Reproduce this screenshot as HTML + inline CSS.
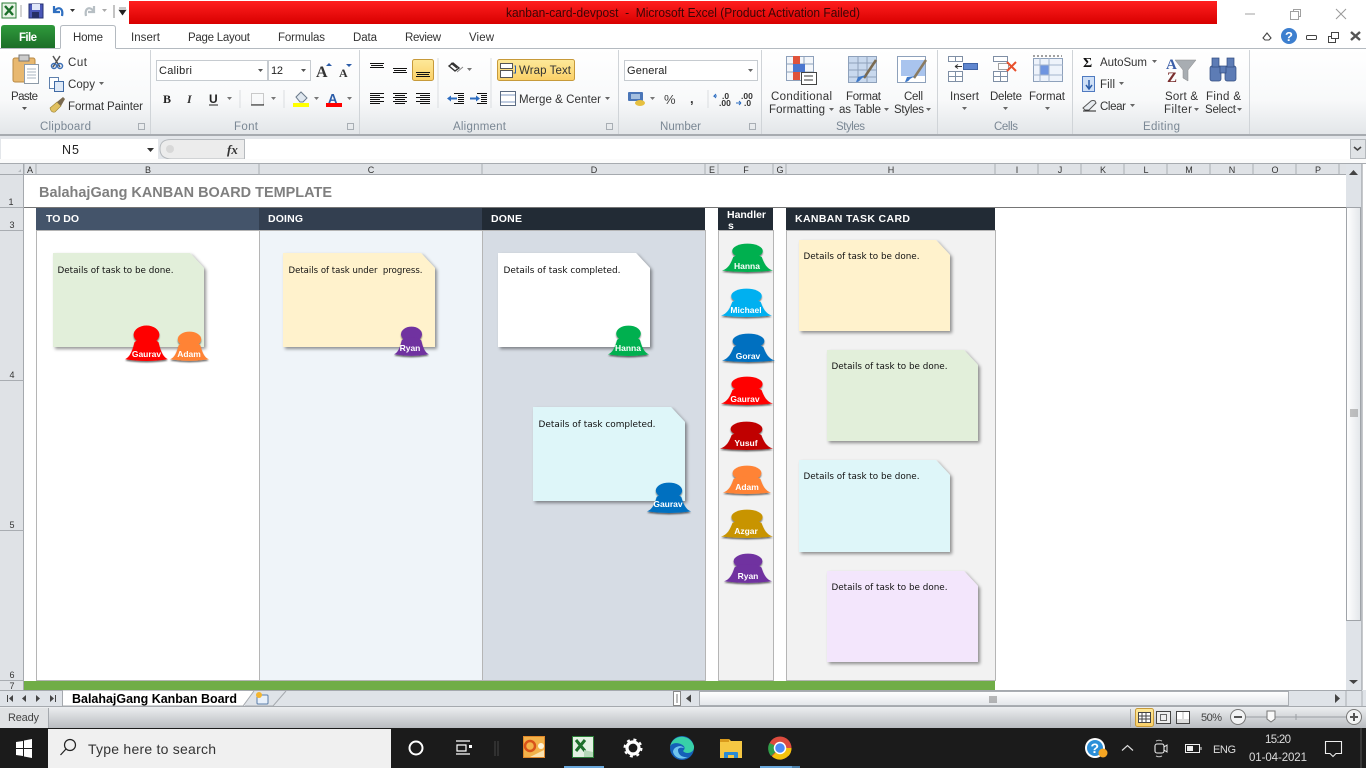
<!DOCTYPE html>
<html lang="en"><head><meta charset="utf-8"><title>kanban-card-devpost - Microsoft Excel</title>
<style>
html,body{margin:0;padding:0;background:#fff;width:1366px;height:768px;overflow:hidden}
svg{display:block}
text{font-family:"Liberation Sans",sans-serif;white-space:pre}
.r{font-size:11.5px;fill:#333}
.g{font-size:11.5px;fill:#7a8794}
.t{font-size:11px;fill:#444}
.c{font-size:9px;fill:#333;text-anchor:middle}
.d{font-family:"DejaVu Sans",sans-serif;font-size:9px;fill:#111}
.h{font-size:10.5px;font-weight:bold;fill:#fff}
.n{font-size:8.5px;font-weight:bold;fill:#fff;text-anchor:middle}
.x{shape-rendering:crispEdges}
</style></head><body>
<svg width="1366" height="768" viewBox="0 0 1366 768" xmlns="http://www.w3.org/2000/svg">
<defs>
<linearGradient id="red" x1="0" y1="0" x2="0" y2="1"><stop offset="0" stop-color="#ff1f1f"/><stop offset="1" stop-color="#d80000"/></linearGradient>
<linearGradient id="rib" x1="0" y1="0" x2="0" y2="1"><stop offset="0" stop-color="#fff"/><stop offset=".6" stop-color="#f8f9fa"/><stop offset="1" stop-color="#e3e6e9"/></linearGradient>
<linearGradient id="file" x1="0" y1="0" x2="0" y2="1"><stop offset="0" stop-color="#2f9a3c"/><stop offset="1" stop-color="#1c6e28"/></linearGradient>
<linearGradient id="sel" x1="0" y1="0" x2="0" y2="1"><stop offset="0" stop-color="#fde99a"/><stop offset="1" stop-color="#fbd067"/></linearGradient>
<linearGradient id="st" x1="0" y1="0" x2="0" y2="1"><stop offset="0" stop-color="#eceef0"/><stop offset="1" stop-color="#b9bcc0"/></linearGradient>
<linearGradient id="sb" x1="0" y1="0" x2="0" y2="1"><stop offset="0" stop-color="#fff"/><stop offset="1" stop-color="#e3e6ea"/></linearGradient>
<linearGradient id="sv" x1="0" y1="0" x2="1" y2="0"><stop offset="0" stop-color="#fff"/><stop offset="1" stop-color="#e3e6ea"/></linearGradient>
<filter id="sh" x="-10%" y="-10%" width="125%" height="125%"><feDropShadow dx="2" dy="2" stdDeviation="1.6" flood-color="#000" flood-opacity=".42"/></filter>
<filter id="ps" x="-10%" y="-10%" width="120%" height="130%"><feDropShadow dx="0" dy="1.5" stdDeviation=".8" flood-color="#000" flood-opacity=".55"/></filter>
<g id="p"><ellipse cx="0" cy="7" rx="15" ry="7.4"/><path d="M-25 26.5C-19 25-16 19-14 13Q-10 10 0 10Q10 10 14 13C16 19 19 25 25 26.5Q0 29.5-25 26.5Z"/></g>
</defs>

<rect width="1366" height="768" fill="#fff"/>

<!-- title bar -->
<rect x="129" y="1" width="1088" height="23" fill="url(#red)"/>
<text x="506" y="17" font-size="12.5" fill="#3a0606" textLength="354" lengthAdjust="spacingAndGlyphs">kanban-card-devpost  -  Microsoft Excel (Product Activation Failed)</text>
<!-- QAT -->
<rect x="2" y="3" width="14" height="15" fill="#e8f3e6" stroke="#2a7d36"/><path d="M5 6L13 15M13 6L5 15" stroke="#1d6f2b" stroke-width="2.4"/>
<path class="x" d="M21 5V17" stroke="#aaa"/>
<rect x="29" y="4" width="14" height="14" fill="#4a57b8" stroke="#26306f"/><rect x="32" y="4" width="8" height="6" fill="#dfe6f8"/><rect x="32" y="12" width="7" height="6" fill="#262f66"/>
<path d="M54 6V12H60M54 12C57 6 64 7 62 16" fill="none" stroke="#2f6fc0" stroke-width="2.2"/>
<path d="M70 9H75L72.5 12Z" fill="#333"/>
<path d="M94 6V12H88M94 12C91 6 84 7 86 16" fill="none" stroke="#b7bfc4" stroke-width="2.2"/>
<path d="M102 9H107L104.500 12Z" fill="#aaa"/>
<path class="x" d="M114 5V18" stroke="#888"/><path d="M119 8H126M119 10H126L122.500 15Z" fill="#222" stroke="#222" stroke-width=".6"/>
<!-- window controls -->
<path class="x" d="M1245 14H1255" stroke="#a0a0a0"/>
<rect x="1290.500" y="11.500" width="8" height="8" fill="none" stroke="#a0a0a0"/><path d="M1293.500 11V9.500H1300.500V16.500H1298" fill="none" stroke="#a0a0a0"/>
<path d="M1336 9L1346 19M1346 9L1336 19" stroke="#999"/>

<!-- tabs -->
<path d="M1 48V28Q1 25 4 25H52Q55 25 55 28V48Z" fill="url(#file)"/>
<text x="19" y="41" font-size="11.500" font-weight="bold" fill="#fff" textLength="18">File</text>
<path d="M0 48.500H60M116 48.500H1366" stroke="#b4bac0"/>
<path d="M60.500 48.500V28Q60.500 25.500 63 25.500H113Q115.500 25.500 115.500 28V48.500" fill="#fff" stroke="#b4bac0"/>
<text x="73" y="41" class="r" textLength="30">Home</text>
<text x="131" y="41" class="r" textLength="29">Insert</text>
<text x="188" y="41" class="r" textLength="62">Page Layout</text>
<text x="278" y="41" class="r" textLength="47">Formulas</text>
<text x="353" y="41" class="r" textLength="24">Data</text>
<text x="405" y="41" class="r" textLength="36">Review</text>
<text x="469" y="41" class="r" textLength="25">View</text>
<!-- help row -->
<path d="M1263 38L1267 33L1271 38L1269 40H1265Z" fill="none" stroke="#444" stroke-width="1.100"/>
<circle cx="1289" cy="36" r="8" fill="#3d7fcf"/><text x="1285" y="41" font-size="13" font-weight="bold" fill="#fff">?</text>
<rect x="1306.500" y="35.500" width="10" height="4" rx="1" fill="none" stroke="#444"/>
<rect x="1328.500" y="36.500" width="7" height="6" fill="none" stroke="#444"/><rect x="1331.500" y="32.500" width="7" height="6" fill="#fff" stroke="#444"/>
<path d="M1351 32L1360 40M1360 32L1351 40" stroke="#555" stroke-width="2.400"/>

<!-- ribbon -->
<rect x="0" y="49" width="1366" height="85" fill="url(#rib)"/>
<rect x="0" y="134" width="1366" height="2" fill="#a7abb0"/>
<path d="M150.500 50V134M359.500 50V134M618.500 50V134M761.500 50V134M937.500 50V134M1072.500 50V134M1249.500 50V134" stroke="#d0d4d8"/>
<text x="40" y="130" class="g" textLength="51">Clipboard</text>
<text x="234" y="130" class="g" textLength="24">Font</text>
<text x="453" y="130" class="g" textLength="53">Alignment</text>
<text x="660" y="130" class="g" textLength="41">Number</text>
<text x="836" y="130" class="g" textLength="29">Styles</text>
<text x="994" y="130" class="g" textLength="24">Cells</text>
<text x="1143" y="130" class="g" textLength="37">Editing</text>
<g fill="none" stroke="#a8aeb4"><path d="M138.500 123.500h6v6h-6z"/><path d="M347.500 123.500h6v6h-6z"/><path d="M606.500 123.500h6v6h-6z"/><path d="M749.500 123.500h6v6h-6z"/></g>

<!-- clipboard -->
<rect x="13" y="58" width="22" height="24" rx="2" fill="#e8b870" stroke="#b98a45"/><rect x="19" y="55" width="10" height="6" fill="#ccc" stroke="#777"/>
<rect x="24.500" y="64.500" width="14" height="19" fill="#fff" stroke="#8d9aa8"/><path class="x" d="M27 69h9M27 72h9M27 75h9M27 78h9" stroke="#aab4c0"/>
<text x="11" y="100" class="r" textLength="27">Paste</text><path d="M22 107h5l-2.500 3z" fill="#555"/>
<path d="M53 56L60 67M60 56L53 67" stroke="#555" stroke-width="1.500"/><circle cx="54" cy="66" r="2.500" fill="none" stroke="#3c6fb5" stroke-width="1.500"/><circle cx="60" cy="66" r="2.500" fill="none" stroke="#3c6fb5" stroke-width="1.500"/>
<text x="68" y="66" class="r" textLength="19">Cut</text>
<rect x="49.500" y="77.500" width="9" height="11" fill="#fff" stroke="#5f80ad"/><rect x="54.500" y="81.500" width="9" height="10" fill="#dfe9f6" stroke="#3f6aa5"/>
<text x="68" y="88" class="r" textLength="27">Copy</text><path d="M99 82h5l-2.500 3z" fill="#666"/>
<path d="M50 108l7-6 4 4-6 6q-4 1-5-4z" fill="#e0c060" stroke="#9a8030" stroke-width=".6"/><path d="M57 102l6-5 2 2-4 7z" fill="#7a6a50"/>
<text x="68" y="110" class="r" textLength="75">Format Painter</text>

<!-- font -->
<rect x="156.500" y="60.500" width="111" height="20" fill="#fff" stroke="#c6cbd0"/><rect x="268.500" y="60.500" width="42" height="20" fill="#fff" stroke="#c6cbd0"/>
<text x="159" y="74" font-size="11" fill="#222" textLength="33">Calibri</text><text x="271" y="74" font-size="11" fill="#222" textLength="12">12</text>
<path d="M258 69h5l-2.500 3zM301 69h5l-2.500 3z" fill="#555"/>
<text x="316" y="77" font-family="Liberation Serif" font-size="16" font-weight="bold" fill="#333" style="font-family:'Liberation Serif',serif">A</text><path d="M326 66h6l-3-3z" fill="#2b5ca8"/>
<text x="339" y="77" font-size="12" font-weight="bold" fill="#333" style="font-family:'Liberation Serif',serif">A</text><path d="M346 64h6l-3 3z" fill="#2b5ca8"/>
<text x="163" y="103" font-size="12" font-weight="bold" fill="#222" style="font-family:'Liberation Serif',serif">B</text>
<text x="187" y="103" font-size="12" font-style="italic" font-weight="bold" fill="#333" style="font-family:'Liberation Serif',serif">I</text>
<text x="209" y="103" font-size="12" font-weight="bold" fill="#222">U</text><path class="x" d="M209 105h9" stroke="#222"/>
<path d="M227 97h5l-2.500 3z" fill="#777"/><path class="x" d="M240 90V108" stroke="#dadde0"/>
<rect x="251.500" y="93.500" width="12" height="11" fill="none" stroke="#999" stroke-dasharray="1 1"/><path class="x" d="M251 105h13" stroke="#222"/><path d="M271 97h5l-2.500 3z" fill="#777"/>
<path class="x" d="M284 90V108" stroke="#dadde0"/>
<path d="M296 97l5-5 6 6-4 4h-3z" fill="#dfe7ef" stroke="#6a7a8a"/><rect x="293" y="103" width="16" height="4" fill="#ffff00"/><path d="M314 97h5l-2.500 3z" fill="#777"/>
<text x="328" y="103" font-size="13" font-weight="bold" fill="#2b5ca8">A</text><rect x="326" y="103" width="16" height="4" fill="#f00"/><path d="M347 97h5l-2.500 3z" fill="#777"/>

<!-- alignment -->
<rect x="412.500" y="59.500" width="21" height="21" rx="2" fill="url(#sel)" stroke="#c79a3a"/>
<g stroke="#111" class="x"><path d="M370 63.500h14M371 65.500h12M370 67.500h14"/><path d="M393 68.500h14M394 70.500h12M393 72.500h14"/><path d="M416 72.500h14M417 74.500h12M416 76.500h14"/>
<path d="M370 93.500h14M370 95.500h10M370 97.500h14M370 99.500h10M370 101.500h14M370 103.500h10"/><path d="M393 93.500h14M395 95.500h10M393 97.500h14M395 99.500h10M393 101.500h14M395 103.500h10"/><path d="M416 93.500h14M420 95.500h10M416 97.500h14M420 99.500h10M416 101.500h14M420 103.500h10"/>
<path d="M454 93.500h10M458 95.500h6M458 97.500h6M458 99.500h6M458 101.500h6M454 103.500h10"/><path d="M477 93.500h10M481 95.500h6M481 97.500h6M481 99.500h6M481 101.500h6M477 103.500h10"/></g>
<path d="M447 98.500l4-3v2h6v2h-6v2z" fill="#2b6cc0"/><path d="M480 98.500l-4-3v2h-6v2h6v2z" fill="#2b6cc0"/>
<path d="M449 66l6 5 4-3-6-5zM451 63l6 5" fill="none" stroke="#333" stroke-width="1.400"/><path d="M457 72l6-5" stroke="#888"/>
<path d="M467 68h5l-2.500 3z" fill="#777"/>
<path class="x" d="M438 58V108M491 58V108" stroke="#dadde0"/>
<rect x="497.500" y="59.500" width="77" height="21" rx="2" fill="url(#sel)" stroke="#c79a3a"/>
<rect x="500.500" y="63.500" width="12" height="5" fill="#fff" stroke="#555"/><rect x="500.500" y="70.500" width="12" height="7" fill="#fff" stroke="#555"/><path d="M514.500 66h1v7h-2" fill="none" stroke="#2b5ca8"/>
<text x="519" y="74" class="r" textLength="52">Wrap Text</text>
<rect x="500.500" y="91.500" width="15" height="14" fill="#fff" stroke="#5a6a80"/><path class="x" d="M501 95h14M501 102h14" stroke="#7f99c0"/>
<text x="519" y="103" class="r" textLength="82">Merge &amp; Center</text><path d="M605 97h5l-2.500 3z" fill="#666"/>

<!-- number -->
<rect x="624.500" y="60.500" width="133" height="20" fill="#fff" stroke="#c6cbd0"/><text x="627" y="74" font-size="11" fill="#222" textLength="40">General</text><path d="M748 69h5l-2.500 3z" fill="#666"/>
<rect x="628" y="92" width="15" height="9" rx="1" fill="#4a76b8"/><rect x="631" y="94" width="9" height="5" fill="#a4bfdf"/><ellipse cx="640" cy="103" rx="5" ry="3" fill="#e6c040"/>
<path d="M650 97h5l-2.500 3z" fill="#777"/>
<text x="664" y="104" font-size="13" fill="#444">%</text>
<text x="690" y="103" font-size="13" font-weight="bold" fill="#333">,</text>
<path class="x" d="M708 90V108" stroke="#dadde0"/>
<text x="722" y="99" font-size="8.500" font-weight="bold" fill="#333">.0</text><text x="719" y="106" font-size="8.500" font-weight="bold" fill="#333">.00</text><path d="M717 96h-3l2-2M714 96l2 2" stroke="#2b6cc0" fill="none"/>
<text x="741" y="99" font-size="8.500" font-weight="bold" fill="#333">.00</text><text x="744" y="106" font-size="8.500" font-weight="bold" fill="#333">.0</text><path d="M736 103h5M741 103l-2-2M741 103l-2 2" stroke="#2b6cc0" fill="none"/>

<!-- styles -->
<rect x="786.500" y="56.500" width="27" height="24" fill="#f3f6fa" stroke="#8ea1bb"/><path class="x" d="M786 64h27M786 72h27M795 56v24M804 56v24" stroke="#8ea1bb"/><rect x="793" y="56" width="7" height="8" fill="#e0533b"/><rect x="793" y="64" width="12" height="8" fill="#4a76cf"/><rect x="793" y="72" width="7" height="8" fill="#e0533b"/>
<rect x="801.500" y="72.500" width="15" height="12" fill="#fff" stroke="#444"/><path class="x" d="M804 76h9M804 80h9" stroke="#333"/>
<text x="771" y="100" class="r" textLength="61">Conditional</text><text x="769" y="113" class="r" textLength="56">Formatting</text><path d="M829 108h5l-2.500 3z" fill="#666"/>
<rect x="848.500" y="56.500" width="28" height="26" fill="#c9d9ee" stroke="#8ea1bb"/><path class="x" d="M848 63h29M848 70h29M848 77h29M858 56v27M867 56v27" stroke="#8ea1bb"/><path d="M876 60l-12 18" stroke="#7a6a50" stroke-width="2.500"/><path d="M866 75l-5 4q-2 3-5 3l2-5z" fill="#3e78c8"/>
<text x="846" y="100" class="r" textLength="35">Format</text><text x="839" y="113" class="r" textLength="42">as Table</text><path d="M884 108h5l-2.500 3z" fill="#666"/>
<rect x="897.500" y="56.500" width="28" height="26" fill="#fff" stroke="#8ea1bb"/><rect x="901" y="60" width="24" height="16" fill="#a9c4ee"/><path d="M926 60l-12 18" stroke="#8a7a60" stroke-width="2.500"/><path d="M915 76l-5 3q-2 3-5 3l2-5z" fill="#3e78c8"/>
<text x="904" y="100" class="r" textLength="19">Cell</text><text x="894" y="113" class="r" textLength="30">Styles</text><path d="M926 108h5l-2.500 3z" fill="#666"/>

<!-- cells -->
<g fill="#fff" stroke="#7f8fa5"><rect x="948.500" y="56.500" width="14" height="5"/><rect x="948.500" y="71.500" width="14" height="10"/><path d="M948 76.500h15M955.500 71v11M955.500 56v6"/></g>
<rect x="963.500" y="63.500" width="14" height="6" fill="#5f86cf" stroke="#3f63a5"/><path d="M955 66.500h7M955 66.500l3-2M955 66.500l3 2" stroke="#333" fill="none"/>
<g fill="#fff" stroke="#7f8fa5"><rect x="993.500" y="56.500" width="14" height="5"/><rect x="993.500" y="71.500" width="14" height="10"/><path d="M993 76.500h15M1000.500 71v11"/><rect x="998.500" y="63.500" width="10" height="6" stroke-dasharray="1 1" stroke="#444"/></g>
<path d="M1007 62l9 9M1016 62l-9 9" stroke="#e8502c" stroke-width="2"/>
<rect x="1033.500" y="58.500" width="29" height="23" fill="#eef3fb" stroke="#8ea1bb"/><rect x="1040" y="65" width="9" height="10" fill="#6f95e0"/><path class="x" d="M1033 65h30M1033 75h30M1040 58v24M1049 58v24" stroke="#a4b5cc"/><path class="x" d="M1033 56h29" stroke="#444" stroke-dasharray="2 2"/>
<text x="950" y="100" class="r" textLength="29">Insert</text><path d="M962 107h5l-2.500 3z" fill="#666"/>
<text x="990" y="100" class="r" textLength="32">Delete</text><path d="M1003 107h5l-2.500 3z" fill="#666"/>
<text x="1029" y="100" class="r" textLength="36">Format</text><path d="M1045 107h5l-2.500 3z" fill="#666"/>

<!-- editing -->
<text x="1083" y="67" font-size="14" font-weight="bold" fill="#111" style="font-family:'Liberation Serif',serif">Σ</text>
<text x="1100" y="66" class="r" textLength="47">AutoSum</text><path d="M1152 60h5l-2.500 3z" fill="#666"/>
<rect x="1082.500" y="76.500" width="12" height="15" fill="#cfe0f7" stroke="#4f7ac0"/><path d="M1089 80v8M1086 85l3 4 3-4" stroke="#2b5ca8" fill="none" stroke-width="1.500"/>
<text x="1100" y="88" class="r" textLength="15">Fill</text><path d="M1119 82h5l-2.500 3z" fill="#666"/>
<path d="M1083 108l8-7q2-1 4 0l1 2-7 7h-4z" fill="#e8ecf0" stroke="#555"/><path class="x" d="M1083 111h13" stroke="#222"/>
<text x="1100" y="110" class="r" textLength="26">Clear</text><path d="M1130 104h5l-2.500 3z" fill="#666"/>
<text x="1166" y="69" font-size="15" font-weight="bold" fill="#3b5ea8" style="font-family:'Liberation Serif',serif">A</text><text x="1167" y="82" font-size="15" font-weight="bold" fill="#7a2e2e" style="font-family:'Liberation Serif',serif">Z</text>
<path d="M1175 60h21l-8 10v11l-5-3v-8z" fill="#a8adb2" stroke="#888" stroke-width=".5"/>
<text x="1165" y="100" class="r" textLength="33">Sort &amp;</text><text x="1164" y="113" class="r" textLength="28">Filter</text><path d="M1194 108h5l-2.500 3z" fill="#666"/>
<g fill="#5d7cb5" stroke="#2f4a7e" stroke-width=".7"><rect x="1210" y="66" width="11" height="15" rx="2"/><rect x="1225" y="66" width="11" height="15" rx="2"/><rect x="1212" y="58" width="7" height="9"/><rect x="1227" y="58" width="7" height="9"/><rect x="1220" y="66" width="6" height="7"/></g>
<text x="1206" y="100" class="r" textLength="35">Find &amp;</text><text x="1205" y="113" class="r" textLength="31">Select</text><path d="M1237 108h5l-2.500 3z" fill="#666"/>

<!-- formula bar -->
<rect x="0" y="136" width="1366" height="28" fill="#e3e6ea"/>
<rect x="1" y="139" width="157" height="20" fill="#fff"/>
<text x="62" y="154" font-size="12.500" fill="#222" textLength="17">N5</text>
<path d="M147 148h7l-3.500 4z" fill="#333"/>
<path d="M172 139.500H244.500V159H172Q160 159 160 149T172 139.500Z" fill="#ececec" stroke="#b6babe"/>
<circle cx="170" cy="149" r="4" fill="#d8d8d8"/>
<text x="227" y="154" font-size="13" font-style="italic" font-weight="bold" fill="#333" style="font-family:'Liberation Serif',serif">fx</text>
<rect x="245" y="139" width="1105" height="20" fill="#fff"/>
<rect x="1350.500" y="139.500" width="15" height="19" fill="#e0e3e6" stroke="#b5b9bd"/><path d="M1354 147l3.500 3 3.500-3" fill="none" stroke="#444" stroke-width="1.600"/>
<rect x="0" y="159" width="1366" height="4" fill="#fbfbfb"/>
<path d="M0 163.500H1366" stroke="#a7abb0"/>

<!-- column header -->
<rect x="0" y="164" width="1346" height="11" fill="#dfe2e6"/>
<path d="M0 174.500H1346" stroke="#a5a9ae"/>
<path class="x" d="M24 164v11M36 164v11M259 164v11M482 164v11M705 164v11M718 164v11M773 164v11M786 164v11M995 164v11M1038 164v11M1081 164v11M1124 164v11M1167 164v11M1210 164v11M1253 164v11M1296 164v11M1339 164v11" stroke="#a9adb2"/>
<path d="M18 172l3-3v3z" fill="#b9bdc2"/>
<text x="30" y="173" class="c">A</text><text x="148" y="173" class="c">B</text><text x="371" y="173" class="c">C</text><text x="594" y="173" class="c">D</text><text x="712" y="173" class="c">E</text><text x="746" y="173" class="c">F</text><text x="780" y="173" class="c">G</text><text x="891" y="173" class="c">H</text><text x="1017" y="173" class="c">I</text><text x="1060" y="173" class="c">J</text><text x="1103" y="173" class="c">K</text><text x="1146" y="173" class="c">L</text><text x="1189" y="173" class="c">M</text><text x="1232" y="173" class="c">N</text><text x="1275" y="173" class="c">O</text><text x="1318" y="173" class="c">P</text>

<!-- row header -->
<rect x="0" y="175" width="24" height="515" fill="#dfe2e6"/>
<path d="M23.500 164V690" stroke="#a5a9ae"/>
<path d="M0 207.500H24M0 230.500H24M0 380.500H24M0 530.500H24M0 680.500H24M0 690.500H24" stroke="#a9adb2"/>
<text x="11" y="205" class="c">1</text><text x="12" y="228" class="c">3</text><text x="12" y="378" class="c">4</text><text x="12" y="528" class="c">5</text><text x="12" y="678" class="c">6</text><text x="12" y="689" class="c">7</text>

<!-- sheet -->
<text x="39" y="197" font-size="14.500" font-weight="bold" fill="#7f7f7f" textLength="293" lengthAdjust="spacingAndGlyphs">BalahajGang KANBAN BOARD TEMPLATE</text>
<path d="M24 207.500H1346" stroke="#757575"/>
<rect x="36" y="208" width="223" height="22" fill="#44546a"/><rect x="259" y="208" width="223" height="22" fill="#333f50"/><rect x="482" y="208" width="223" height="22" fill="#222b35"/><rect x="718" y="208" width="55" height="22" fill="#222b35"/><rect x="786" y="208" width="209" height="22" fill="#222b35"/>
<text x="46" y="222" class="h" textLength="33">TO DO</text><text x="268" y="222" class="h" textLength="35">DOING</text><text x="491" y="222" class="h" textLength="31">DONE</text>
<text x="727" y="218" class="h" textLength="39">Handler</text><text x="728" y="229" class="h">s</text>
<text x="795" y="222" class="h" textLength="115">KANBAN TASK CARD</text>
<rect x="36.500" y="230.500" width="223" height="450" fill="#fff" stroke="#b5b5b5"/>
<rect x="259.500" y="230.500" width="223" height="450" fill="#eff4f9" stroke="#b5b5b5"/>
<rect x="482.500" y="230.500" width="223" height="450" fill="#d6dce4" stroke="#b5b5b5"/>
<rect x="718.500" y="230.500" width="55" height="450" fill="#f2f2f2" stroke="#b5b5b5"/>
<rect x="786.500" y="230.500" width="209" height="450" fill="#f2f2f2" stroke="#b5b5b5"/>
<rect x="24" y="681" width="971" height="9" fill="#70ad47"/>

<!-- cards -->
<g filter="url(#sh)">
<path d="M53 253H190L204 268V347H53Z" fill="#e2efda"/>
<path d="M283 253H421L435 268V347H283Z" fill="#fff2cc"/>
<path d="M498 253H636L650 268V347H498Z" fill="#fff"/>
<path d="M533 407H671L685 422V501H533Z" fill="#def6f9"/>
<path d="M799 240H936L950 255V331H799Z" fill="#fff2cc"/>
<path d="M827 350H964L978 365V441H827Z" fill="#e2efda"/>
<path d="M799 460H936L950 475V552H799Z" fill="#def6f9"/>
<path d="M827 571H964L978 586V662H827Z" fill="#f3e6fc"/>
</g>
<text x="57.500" y="273" class="d" textLength="116" lengthAdjust="spacingAndGlyphs">Details of task to be done.</text>
<text x="288.500" y="273" class="d" textLength="134" lengthAdjust="spacingAndGlyphs">Details of task under  progress.</text>
<text x="503.500" y="273" class="d" textLength="117" lengthAdjust="spacingAndGlyphs">Details of task completed.</text>
<text x="538.500" y="427" class="d" textLength="117" lengthAdjust="spacingAndGlyphs">Details of task completed.</text>
<text x="803.500" y="259" class="d" textLength="116" lengthAdjust="spacingAndGlyphs">Details of task to be done.</text>
<text x="831.500" y="369" class="d" textLength="116" lengthAdjust="spacingAndGlyphs">Details of task to be done.</text>
<text x="803.500" y="479" class="d" textLength="116" lengthAdjust="spacingAndGlyphs">Details of task to be done.</text>
<text x="831.500" y="590" class="d" textLength="116" lengthAdjust="spacingAndGlyphs">Details of task to be done.</text>

<!-- people on cards -->
<g filter="url(#ps)">
<use href="#p" fill="#ff0000" transform="translate(146.500 326) scale(.86 1.25)"/>
<use href="#p" fill="#ff8336" transform="translate(189.500 332) scale(.78 1.03)"/>
<use href="#p" fill="#7030a0" transform="translate(411.500 327) scale(.7 1.03)"/>
<use href="#p" fill="#00b050" transform="translate(628.500 326) scale(.82 1.07)"/>
<use href="#p" fill="#0070c0" transform="translate(669 483) scale(.88 1.07)"/>
<use href="#p" fill="#00b050" transform="translate(747.500 244) scale(1.02 1)"/>
<use href="#p" fill="#00b0f0" transform="translate(746.500 289) scale(1.02 1)"/>
<use href="#p" fill="#0070c0" transform="translate(748.500 334) scale(1.06 1)"/>
<use href="#p" fill="#ff0000" transform="translate(747 377) scale(1.04 1)"/>
<use href="#p" fill="#c00000" transform="translate(746.500 422) scale(1.06 1)"/>
<use href="#p" fill="#ff8336" transform="translate(747 466) scale(.96 1)"/>
<use href="#p" fill="#c89400" transform="translate(747 510) scale(1.04 1)"/>
<use href="#p" fill="#7030a0" transform="translate(748 554) scale(.96 1.03)"/>
</g>
<text x="146.500" y="357" class="n">Gaurav</text><text x="189" y="357" class="n">Adam</text><text x="410" y="351" class="n">Ryan</text><text x="628" y="351" class="n">Hanna</text><text x="668" y="507" class="n">Gaurav</text>
<text x="747" y="269" class="n">Hanna</text><text x="746" y="313" class="n">Michael</text><text x="748" y="359" class="n">Gorav</text><text x="745" y="402" class="n">Gaurav</text><text x="746" y="446" class="n">Yusuf</text><text x="747" y="490" class="n">Adam</text><text x="746" y="534" class="n">Azgar</text><text x="748" y="579" class="n">Ryan</text>

<!-- vertical scrollbar -->
<rect x="1346" y="164" width="16" height="526" fill="#dfe3e8"/>
<path class="x" d="M1362 164V690" stroke="#8f9398"/>
<rect x="1346.500" y="207.500" width="14" height="413" fill="url(#sv)" stroke="#a0a4a9"/>
<path d="M1349 175l4.500-5 4.500 5zM1349 680h9l-4.500 4z" fill="#444"/>
<path class="x" d="M1350 410h8M1350 412h8M1350 414h8M1350 416h8" stroke="#888"/>

<!-- sheet tabs -->
<rect x="0" y="690" width="1366" height="17" fill="#dfe3e8"/>
<path d="M0 690.500H1362M0 706.500H1366" stroke="#a5a9ae"/>
<g fill="#444"><path d="M7 695v7h1v-7zM13 695v7l-4-3.500z"/><path d="M26 695v7l-4-3.500z"/><path d="M36 695v7l4-3.500z"/><path d="M50 695v7l4-3.500zM55 695v7h1v-7z"/></g>
<path d="M62.500 690.500V706H243L254 691" fill="#fff" stroke="#a5a9ae"/>
<text x="72" y="703" font-size="13" font-weight="bold" fill="#000" textLength="165" lengthAdjust="spacingAndGlyphs">BalahajGang Kanban Board</text>
<path d="M245 706H273L286 691" fill="none" stroke="#a5a9ae"/>
<rect x="257" y="695" width="11" height="9" rx="1" fill="#e8f0fa" stroke="#5a7da8"/><circle cx="259" cy="695" r="3" fill="#f3b530"/>
<rect x="673.500" y="691.500" width="7" height="14" fill="#fff" stroke="#888"/><path class="x" d="M677 694v9" stroke="#777"/>
<path d="M686 698.500l5-4v8z" fill="#444"/>
<rect x="699.500" y="691.500" width="589" height="14" fill="url(#sb)" stroke="#a9adb2"/>
<path class="x" d="M990 696v7M992 696v7M994 696v7M996 696v7" stroke="#777"/>
<path d="M1335 694l5 4.500-5 4.500z" fill="#444"/>
<path class="x" d="M1346 691v15M1362 691v15" stroke="#a9adb2"/>

<!-- status -->
<rect x="0" y="707" width="1366" height="21" fill="url(#st)"/>
<rect x="0" y="708" width="48" height="20" fill="#e0e2e4"/><path d="M48.500 708V728" stroke="#a5a9ae"/>
<text x="8" y="721" class="t" textLength="31">Ready</text>
<path d="M1130.500 709V727" stroke="#a5a9ae"/>
<rect x="1135.500" y="708.500" width="18" height="18" rx="2" fill="url(#sel)" stroke="#c79a3a"/>
<rect x="1138.500" y="712.500" width="12" height="10" fill="#fff" stroke="#444"/><path class="x" d="M1138 716h13M1138 719h13M1142 712v11M1146 712v11" stroke="#444"/>
<rect x="1156.500" y="711.500" width="14" height="12" fill="#eee" stroke="#444"/><rect x="1160.500" y="714.500" width="6" height="6" fill="none" stroke="#666"/>
<rect x="1176.500" y="711.500" width="13" height="12" fill="#ddd" stroke="#444"/><rect x="1177" y="712" width="5" height="7" fill="#fff"/><rect x="1184" y="712" width="5" height="7" fill="#fff"/>
<text x="1201" y="721" class="t" textLength="21">50%</text>
<path class="x" d="M1246 717H1347" stroke="#9a9ea3"/><path class="x" d="M1296 714v6" stroke="#9a9ea3"/>
<circle cx="1238" cy="717" r="7.500" fill="#f2f3f4" stroke="#777"/><path d="M1234 717h8" stroke="#555" stroke-width="2"/>
<circle cx="1354" cy="717" r="7.500" fill="#f2f3f4" stroke="#777"/><path d="M1350 717h8M1354 713v8" stroke="#555" stroke-width="2"/>
<path d="M1267 711h8v8l-4 3-4-3z" fill="#fafafa" stroke="#777"/>

<!-- taskbar -->
<rect x="0" y="728" width="1366" height="40" fill="#1b1b1b"/>
<path d="M16 742l7-1v7h-7zM24 740.500l8-1.500v9h-8zM16 749h7v7l-7-1zM24 749h8v9l-8-1.500z" fill="#fff"/>
<rect x="48" y="729" width="343" height="39" fill="#f0f0f0"/>
<circle cx="70" cy="745" r="5.500" fill="none" stroke="#222" stroke-width="1.200"/><path d="M66 749l-5.500 6" stroke="#222" stroke-width="1.200"/>
<text x="88" y="754" font-size="14" fill="#333" textLength="128">Type here to search</text>
<circle cx="416" cy="748" r="6.500" fill="none" stroke="#fff" stroke-width="2"/>
<path d="M456 741h14M456 754h14M457 745h9v6h-9z" fill="none" stroke="#fff" stroke-width="1.200"/><rect x="469" y="745" width="3" height="3" fill="#fff"/>
<path class="x" d="M495 741v15M498 741v15" stroke="#444"/>
<rect x="523.500" y="736.500" width="21" height="21" fill="#f3b24a" stroke="#e0872a"/><circle cx="530" cy="746" r="5" fill="none" stroke="#d8531a" stroke-width="2.500"/><path d="M530 757l14-7v7z" fill="#fbe3b0"/><circle cx="541" cy="746" r="3" fill="#fff4d8"/>
<rect x="572.500" y="736.500" width="21" height="21" fill="#e3f1e3" stroke="#2a7d36"/><path d="M576 740l9 11M585 740l-9 11" stroke="#1d6f2b" stroke-width="3"/><path d="M584 750l9 2v5h-9z" fill="#b5d9b8"/>
<circle cx="633" cy="748" r="6" fill="none" stroke="#fff" stroke-width="3.200"/><circle cx="633" cy="748" r="8.500" fill="none" stroke="#fff" stroke-width="2" stroke-dasharray="3 3.700"/>
<circle cx="682" cy="748" r="12" fill="#1560b8"/><path d="M670 747C672 734 690 733 694 746C695 753 686 755 683 751C690 745 672 739 670 747Z" fill="#38d0a8"/><path d="M678 750c0 5 5 8 10 7-5 3-13 2-15-5 0-5 8-8 11-4-3-1-6 0-6 2z" fill="#6fc5ef"/>
<path d="M720 739h9l2 2h11v17h-22z" fill="#f5c743"/><rect x="720" y="739" width="9" height="3" fill="#d99a1c"/><path d="M724 758v-5q0-1 1-1h12q1 0 1 1v5h-4v-3h-6v3z" fill="#2a8ad4"/>
<circle cx="780" cy="748" r="11.500" fill="#dd4b3e"/><path d="M780 748l10 5.500A11.500 11.500 0 0 1 772 756.500Z" fill="#f4c20d"/><path d="M780 748L771 756A11.500 11.500 0 0 1 769.500 743Z" fill="#319f4a"/><path d="M780 748h11.500a11.500 11.500 0 0 1-3 8z" fill="#f4c20d"/><circle cx="780" cy="748" r="5.500" fill="#4c8bf5" stroke="#fff" stroke-width="1.500"/>
<rect x="564" y="766" width="40" height="2" fill="#6aa8dc"/><rect x="760" y="766" width="32" height="2" fill="#6aa8dc"/><rect x="792" y="766" width="8" height="2" fill="#4a7ea8"/>
<!-- tray -->
<circle cx="1095" cy="748" r="10" fill="#fff"/><circle cx="1095" cy="748" r="8" fill="#2c8fd8"/><text x="1090.500" y="753" font-size="14" font-weight="bold" fill="#fff">?</text><circle cx="1103" cy="753" r="4.500" fill="#f6a623"/>
<path d="M1122 750.500l5.500-5 5.500 5" fill="none" stroke="#ddd" stroke-width="1.200"/>
<rect x="1155" y="744" width="9" height="9" rx="2" fill="none" stroke="#eee" stroke-width="1.100"/><path d="M1164 747l3-2v7l-3-2z" fill="none" stroke="#eee"/><path d="M1156 741q3-1.500 6 0M1156 756q3 1.500 6 0" fill="none" stroke="#bbb"/>
<rect x="1185.500" y="744.500" width="14" height="8" fill="none" stroke="#eee"/><rect x="1187" y="746" width="6" height="5" fill="#eee"/><path class="x" d="M1201 747v3" stroke="#eee"/>
<text x="1213" y="753" font-size="11" fill="#ddd" textLength="23">ENG</text>
<text x="1265" y="743" font-size="11.500" fill="#ddd" textLength="26">15:20</text>
<text x="1249" y="761" font-size="11.500" fill="#ddd" textLength="58">01-04-2021</text>
<path d="M1325.500 741.500H1341.500V753.500H1336L1333 756.500L1330 753.500H1325.500Z" fill="none" stroke="#eee" stroke-width="1.100"/>
<path class="x" d="M1361 728V768" stroke="#555"/>
</svg>
</body></html>
